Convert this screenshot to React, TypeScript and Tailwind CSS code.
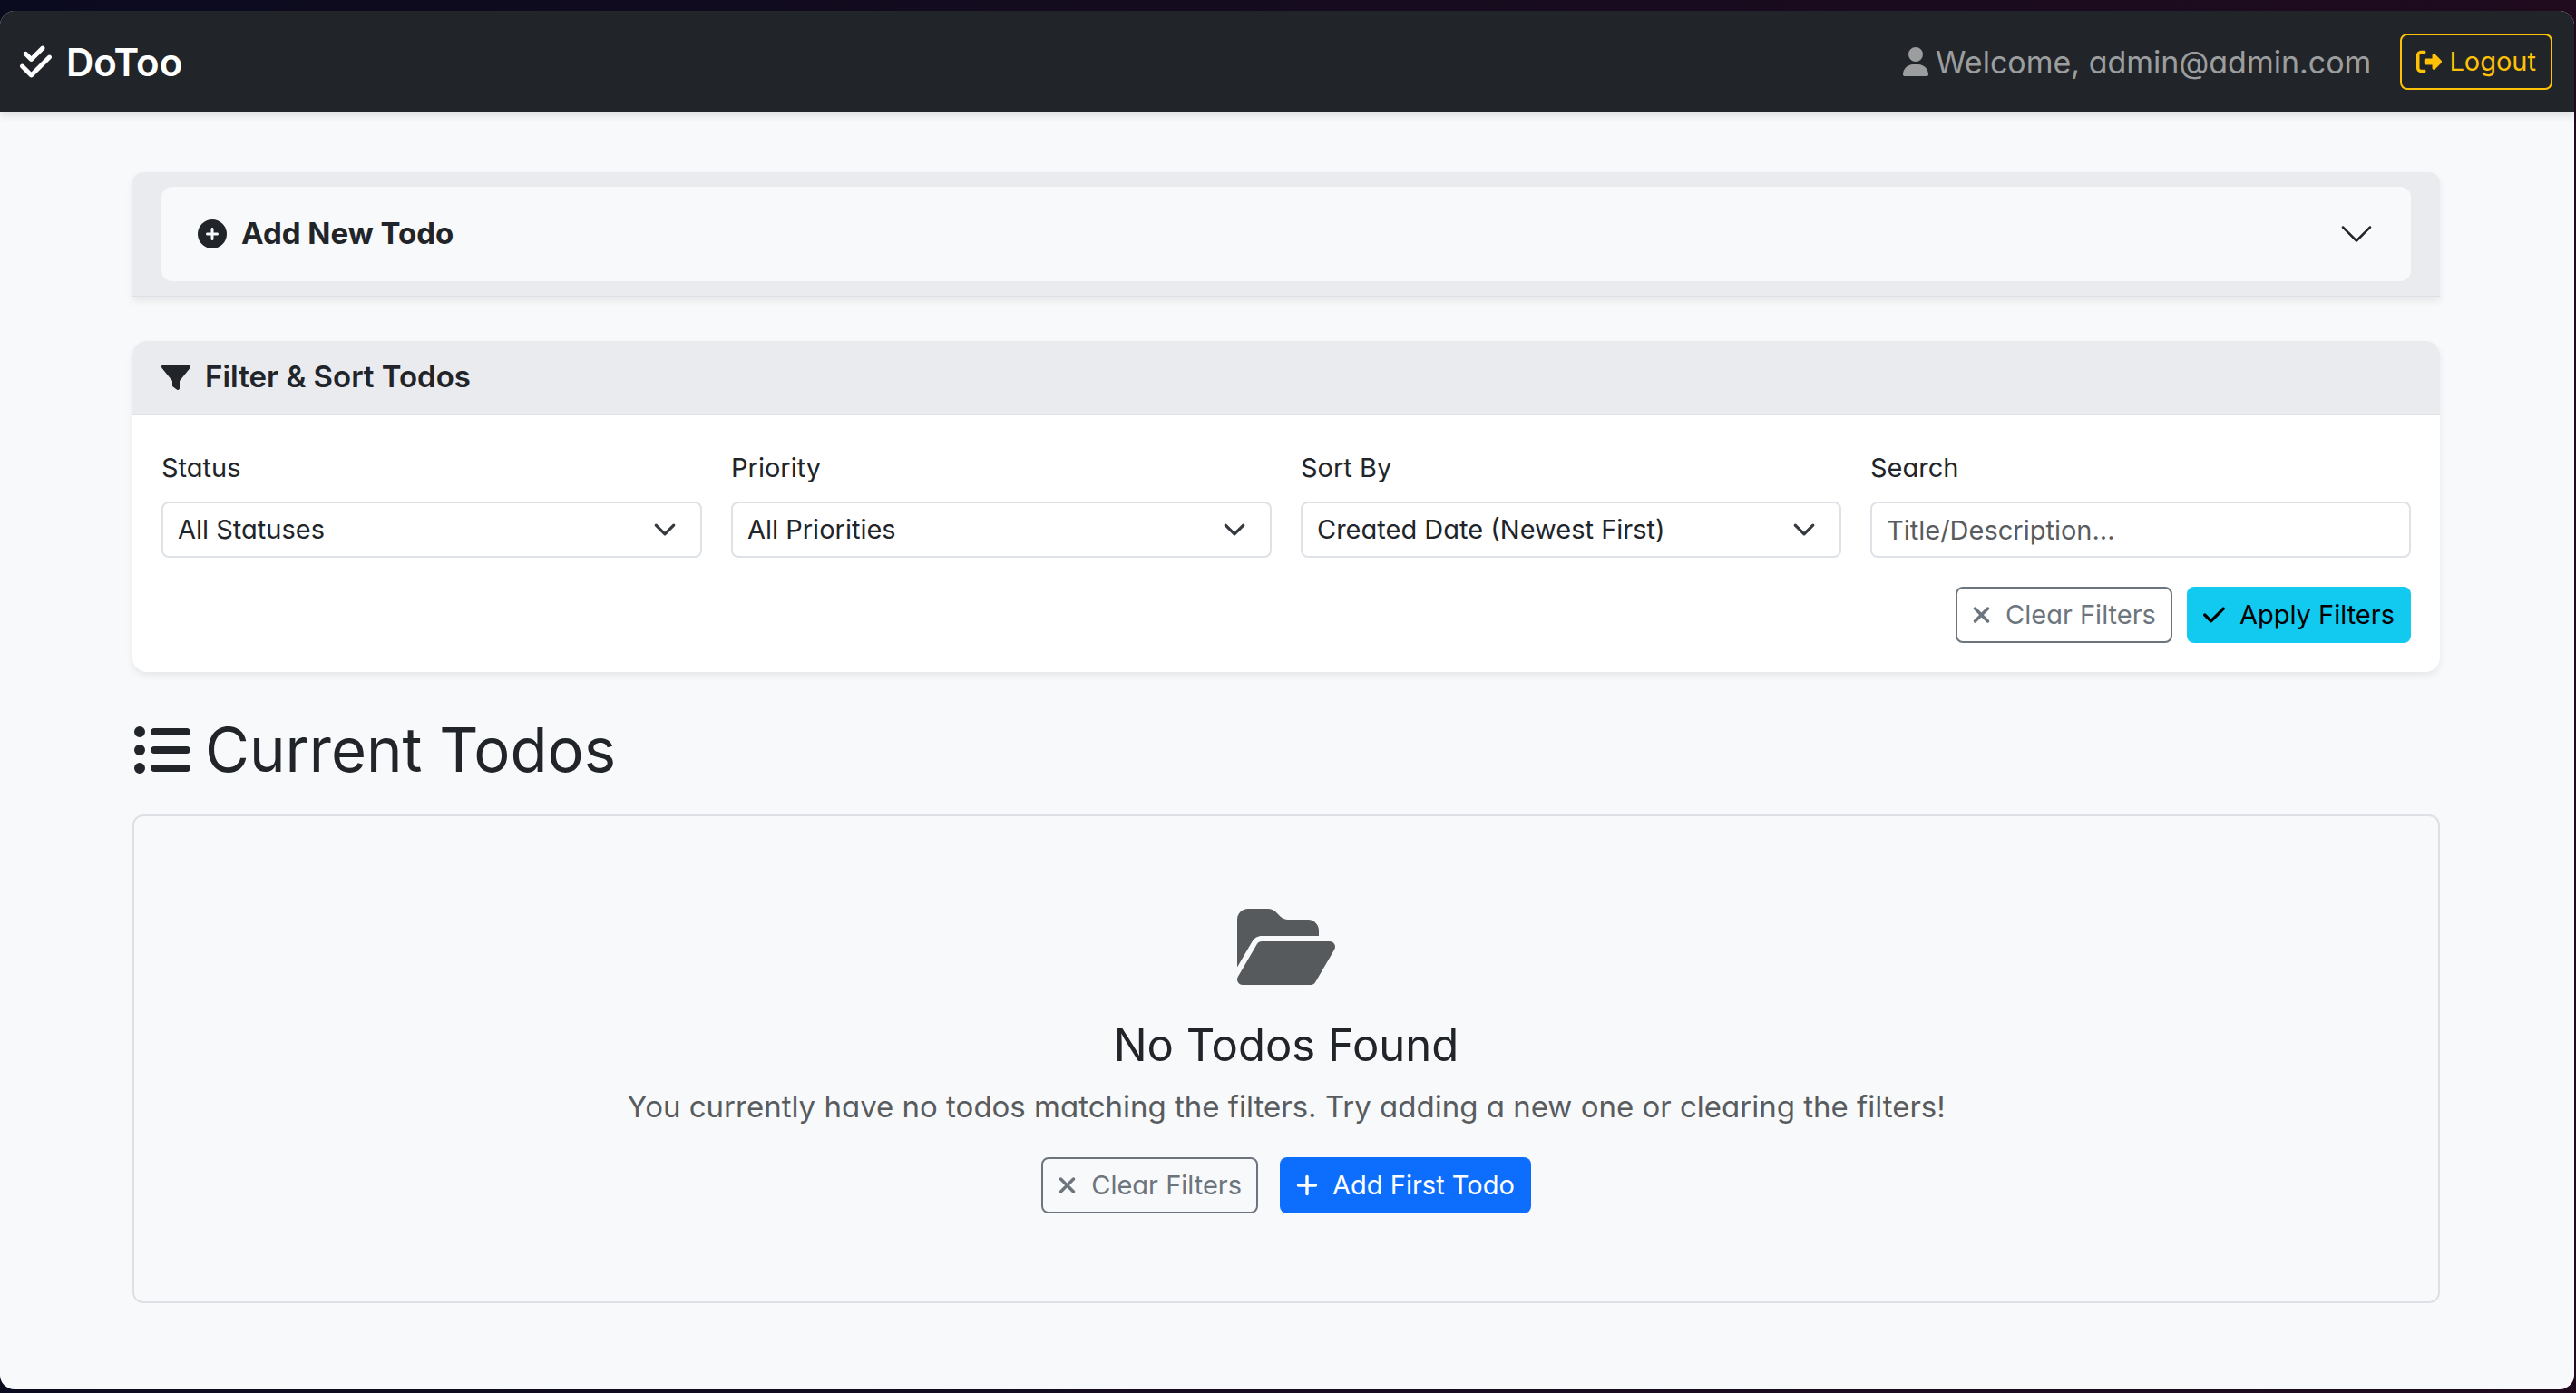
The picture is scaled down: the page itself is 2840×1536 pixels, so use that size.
import { useId, useState } from "react";
import type { ReactNode } from "react";
import {
  FaCheck,
  FaCheckDouble,
  FaCirclePlus,
  FaFilter,
  FaFolderOpen,
  FaListUl,
  FaPlus,
  FaRightFromBracket,
  FaUser,
  FaXmark,
} from "react-icons/fa6";

function Chevron({ className, stroke }: { className: string; stroke: number }) {
  return (
    <svg viewBox="0 0 16 16" fill="none" aria-hidden="true" className={className}>
      <path
        d="m2 5 6 6 6-6"
        stroke="currentColor"
        strokeWidth={stroke}
        strokeLinecap="round"
        strokeLinejoin="round"
      />
    </svg>
  );
}

function SelectField({ label, options }: { label: string; options: string[] }) {
  const id = useId();
  return (
    <div className="flex flex-col gap-4">
      <label htmlFor={id} className="text-[29px] leading-[42px]">
        {label}
      </label>
      <div className="relative">
        <select
          id={id}
          className="h-[62px] w-full appearance-none rounded-lg border-2 border-[#dee2e6] bg-white pr-16 pl-4 text-[29px] text-[#212529]"
        >
          {options.map((option) => (
            <option key={option}>{option}</option>
          ))}
        </select>
        <Chevron
          stroke={2}
          className="pointer-events-none absolute top-[18px] right-7 size-[26px] text-[#343a40]"
        />
      </div>
    </div>
  );
}

function ClearButton() {
  return (
    <button
      type="button"
      className="flex h-[62px] items-center gap-4 rounded-lg border-2 border-[#6c757d] px-4 text-[29px] text-[#6c757d]"
    >
      <FaXmark className="h-7 w-[21px]" />
      Clear Filters
    </button>
  );
}

function Card({ children }: { children: ReactNode }) {
  return (
    <section className="overflow-hidden rounded-2xl bg-white shadow-[0_4px_8px_rgba(0,0,0,0.075)]">
      {children}
    </section>
  );
}

export default function App() {
  const [open, setOpen] = useState(false);
  const searchId = useId();

  return (
    <div className="flex min-h-screen flex-col bg-linear-to-r from-[#0b0b1f] to-[#1f0a1e] pt-3 pr-0.5 pb-1 font-['Inter','Liberation_Sans',sans-serif] text-[#212529] [font-feature-settings:'cv11']">
      <div className="flex flex-1 flex-col overflow-hidden rounded-2xl bg-[#f8f9fb]">
        <header className="flex h-28 items-center justify-between bg-[#212529] pr-6 pl-[22px] shadow-[0_4px_8px_rgba(0,0,0,0.1)]">
          <a href="#" className="flex items-center gap-4 text-[42px] font-semibold text-white">
            <FaCheckDouble className="h-10 w-[35px]" />
            DoToo
          </a>
          <div className="flex items-center gap-8">
            <span className="flex items-center gap-2 text-[34px] text-[#9b9d9e]">
              <FaUser className="h-8 w-7" />
              Welcome, admin@admin.com
            </span>
            <button
              type="button"
              className="flex h-[62px] items-center gap-2 rounded-lg border-2 border-[#ffc107] px-4 text-[29px] text-[#ffc107]"
            >
              <FaRightFromBracket className="size-7" />
              Logout
            </button>
          </div>
        </header>

        <main className="mx-auto flex w-full max-w-[2638px] flex-col pt-[66px] pr-12 pb-16 pl-[46px]">
          <section className="rounded-t-xl border-b-2 border-[#dedfe6] bg-[#eaebef] px-8 py-4 shadow-[0_4px_8px_rgba(0,0,0,0.075)]">
            <button
              type="button"
              aria-expanded={open}
              onClick={() => setOpen(!open)}
              className="flex h-[104px] w-full items-center gap-4 rounded-xl bg-[#f8f9fb] px-10 text-[33px] font-bold"
            >
              <FaCirclePlus className="size-8" />
              Add New Todo
              <Chevron stroke={1} className="ml-auto size-10" />
            </button>
          </section>

          <div className="mt-12">
            <Card>
              <h2 className="flex h-[82px] items-center gap-4 border-b-2 border-[#dee2e6] bg-[#eaebef] px-8 text-[33px] font-semibold">
                <FaFilter className="size-8" />
                Filter &amp; Sort Todos
              </h2>
              <form className="flex flex-col gap-8 px-8 pt-[37px] pb-8" onSubmit={(e) => e.preventDefault()}>
                <div className="grid grid-cols-4 gap-8">
                  <SelectField label="Status" options={["All Statuses", "Pending", "Completed"]} />
                  <SelectField label="Priority" options={["All Priorities", "High", "Medium", "Low"]} />
                  <SelectField
                    label="Sort By"
                    options={["Created Date (Newest First)", "Created Date (Oldest First)"]}
                  />
                  <div className="flex flex-col gap-4">
                    <label htmlFor={searchId} className="text-[29px] leading-[42px]">
                      Search
                    </label>
                    <input
                      id={searchId}
                      type="text"
                      placeholder="Title/Description..."
                      className="h-[62px] w-full rounded-lg border-2 border-[#dee2e6] bg-white px-4 text-[29px] placeholder:text-[#595c5f]"
                    />
                  </div>
                </div>
                <div className="flex justify-end gap-4">
                  <ClearButton />
                  <button
                    type="submit"
                    className="flex h-[62px] items-center gap-4 rounded-lg bg-[#12caf0] px-[18px] text-[29px] text-black"
                  >
                    <FaCheck className="h-7 w-6" />
                    Apply Filters
                  </button>
                </div>
              </form>
            </Card>
          </div>

          <h1 className="mt-12 flex h-[76px] items-center gap-4 text-[67px]">
            <FaListUl className="size-16" />
            Current Todos
          </h1>

          <section className="mt-[33px] flex h-[539px] flex-col items-center rounded-xl border-2 border-[#dee0e6] pt-24">
            <FaFolderOpen className="h-24 w-[108px] text-[#565a5d]" />
            <h2 className="mt-8 text-[49px] leading-[58px]">No Todos Found</h2>
            <p className="mt-3 text-[33px] leading-[52px] text-[#595c5f]">
              You currently have no todos matching the filters. Try adding a new one or clearing the filters!
            </p>
            <div className="mt-[30px] flex gap-6">
              <ClearButton />
              <button
                type="button"
                className="flex h-[62px] items-center gap-4 rounded-lg bg-[#0d6efd] px-[18px] text-[29px] text-white"
              >
                <FaPlus className="h-7 w-6" />
                Add First Todo
              </button>
            </div>
          </section>
        </main>
      </div>
    </div>
  );
}
